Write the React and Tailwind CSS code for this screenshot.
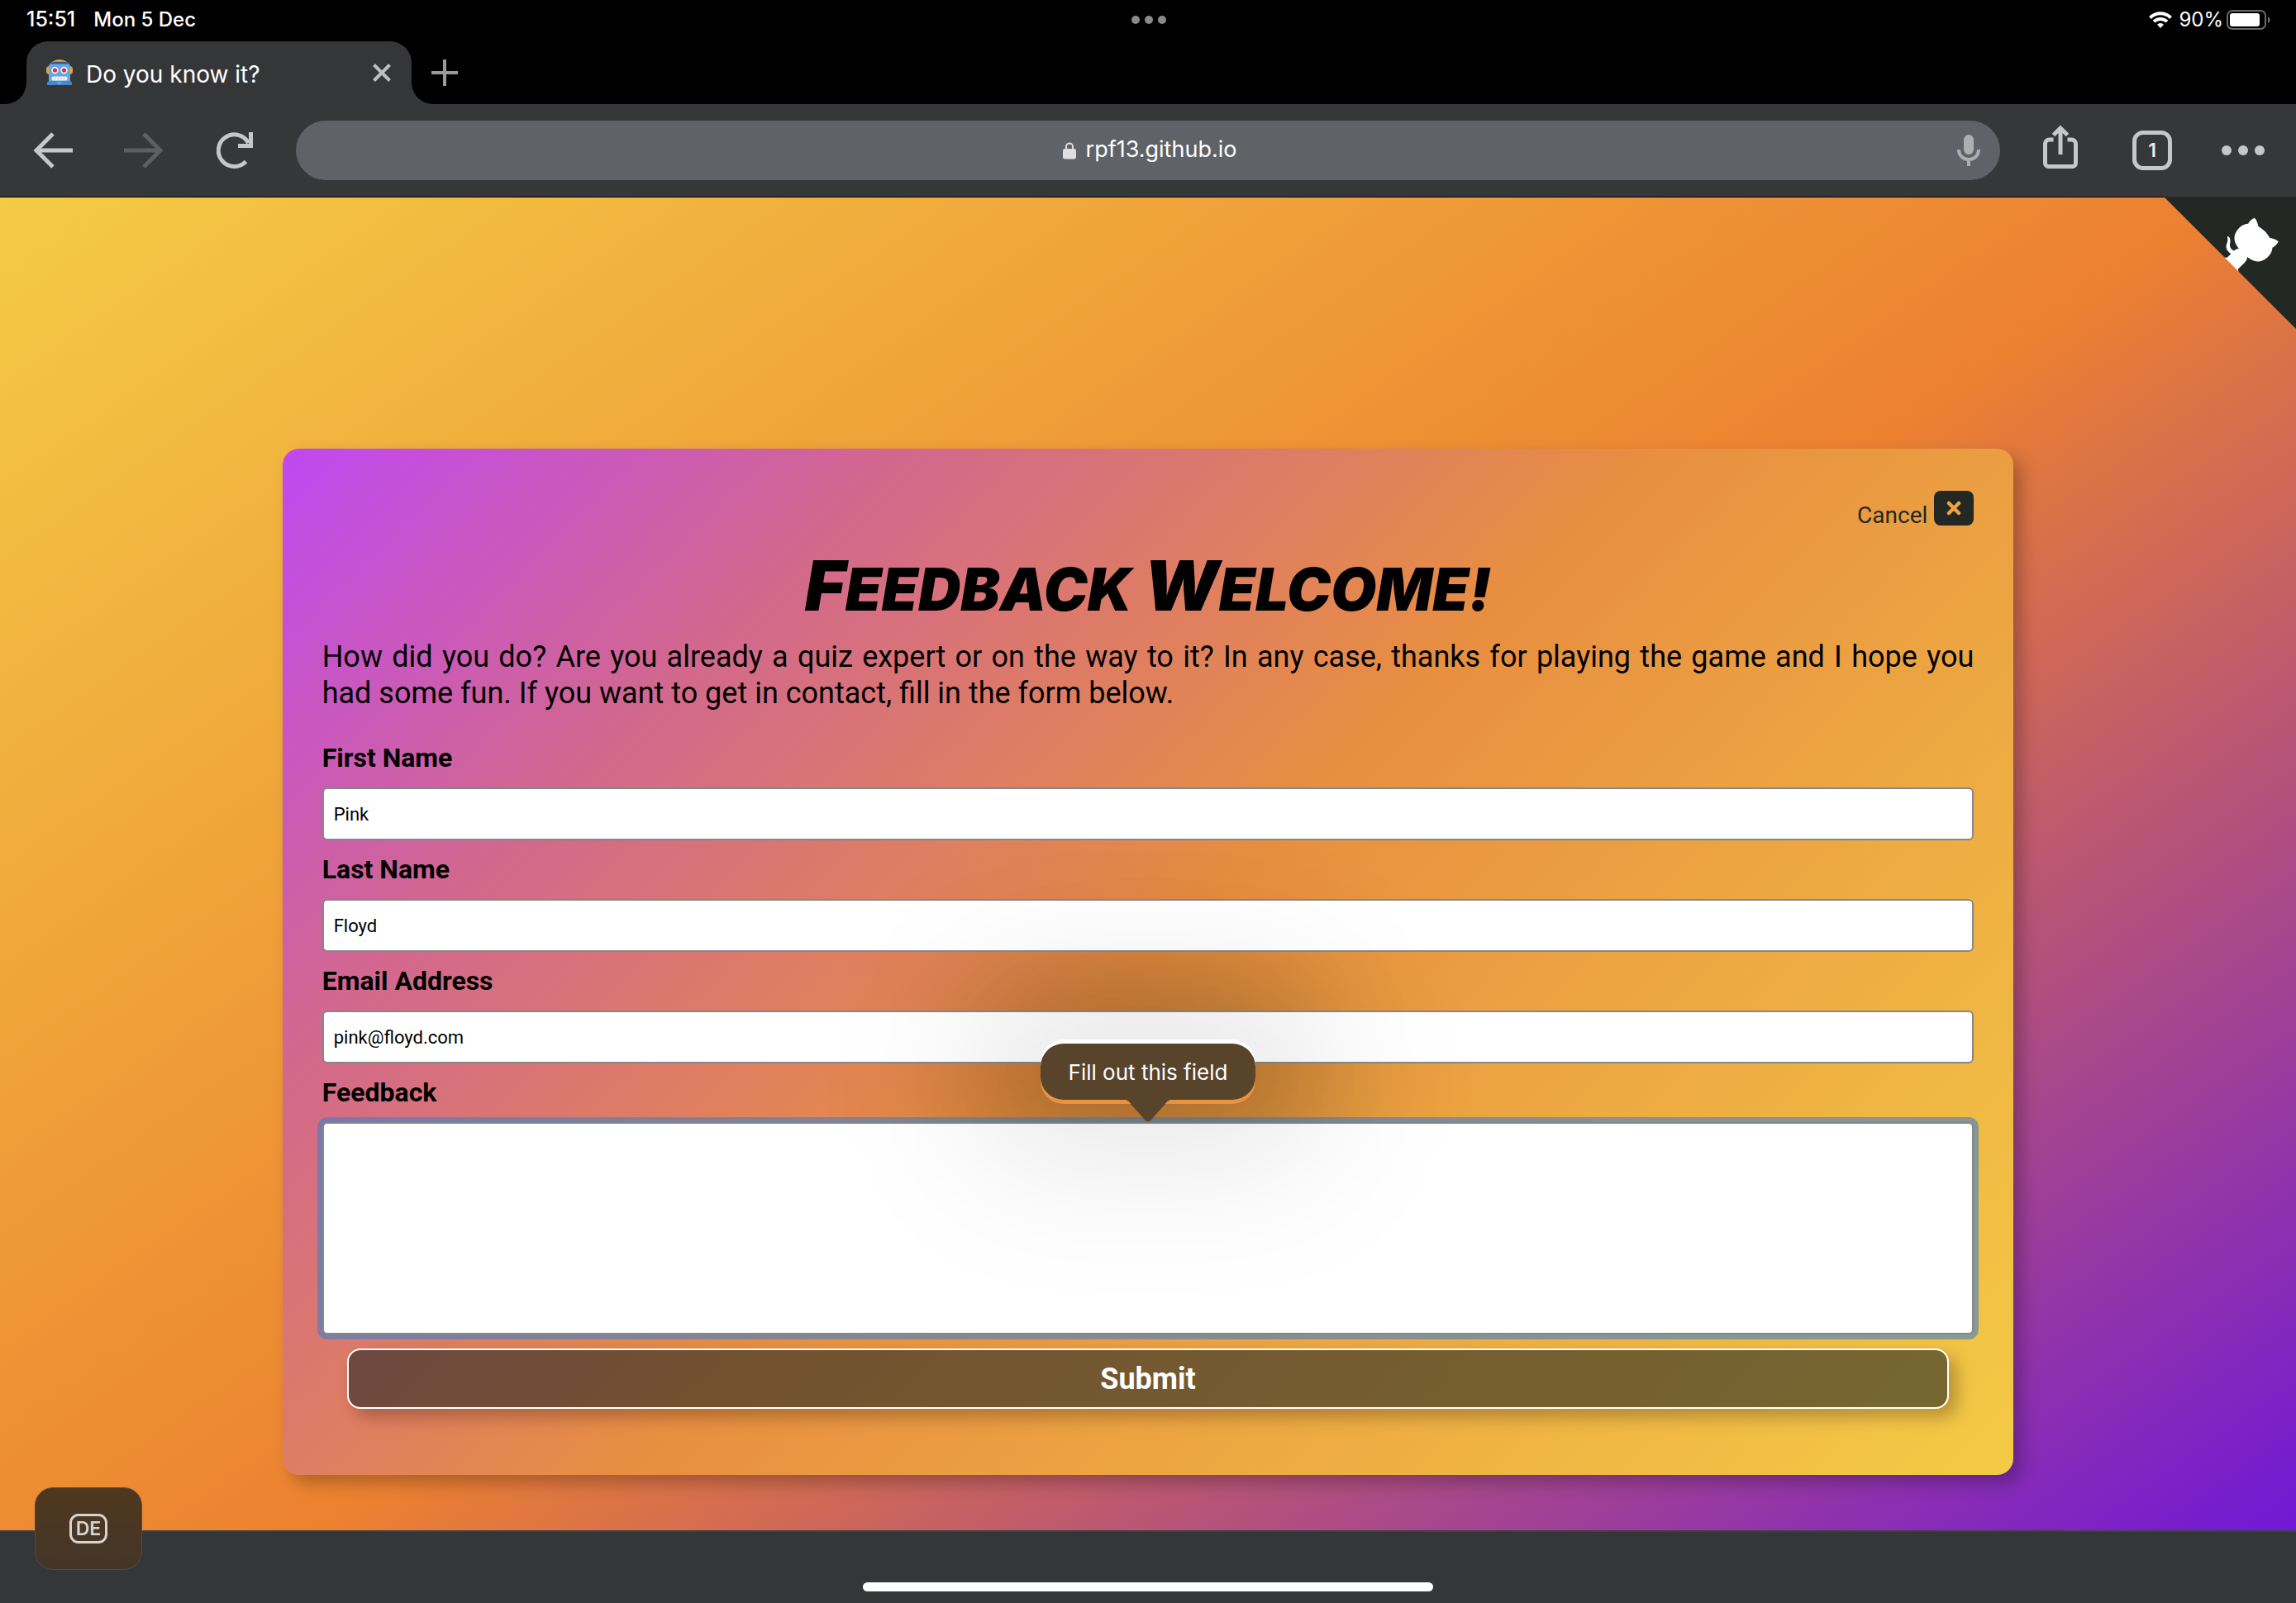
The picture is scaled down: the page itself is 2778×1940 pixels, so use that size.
import React from "react";

const fields = [
  { id: "first-name", label: "First Name", value: "Pink", type: "text" },
  { id: "last-name", label: "Last Name", value: "Floyd", type: "text" },
  { id: "email", label: "Email Address", value: "pink@floyd.com", type: "email" },
];

function StatusBar() {
  return (
    <div className="grid h-[50px] grid-cols-3 items-center pr-[30px] pb-[2px] pl-8 text-2xl font-medium text-white">
      <div className="flex items-baseline gap-[22px]">
        <span className="text-[25px]">15:51</span>
        <span>Mon 5 Dec</span>
      </div>
      <div className="flex justify-center gap-[6px]">
        <span className="size-[10px] rounded-full bg-[#8a8a8a]" />
        <span className="size-[10px] rounded-full bg-[#8a8a8a]" />
        <span className="size-[10px] rounded-full bg-[#8a8a8a]" />
      </div>
      <div className="flex items-center justify-end">
        <svg width="28" height="20" viewBox="0 0 28 20" fill="none" stroke="#fff" strokeWidth="4">
          <path d="M1.5 7.5a17.7 17.7 0 0 1 25 0" />
          <path d="M6 12.2a11.3 11.3 0 0 1 16 0" />
          <path d="M14 20l-4-4.3a5.6 5.6 0 0 1 8 0z" fill="#fff" stroke="none" />
        </svg>
        <span className="mr-1 ml-2 font-normal">90%</span>
        <svg width="54" height="24" viewBox="0 0 54 24">
          <rect x="1" y="1" width="46" height="22" rx="6" fill="none" stroke="#6b6b6b" strokeWidth="2" />
          <rect x="4" y="4" width="36" height="16" rx="3" fill="#fff" />
          <path d="M50 8c3.500 1.500 3.500 6.500 0 8z" fill="#6b6b6b" />
        </svg>
      </div>
    </div>
  );
}

function Robot() {
  return (
    <svg width="32" height="32" viewBox="0 0 32 32">
      <rect x="0" y="8" width="32" height="10" rx="4" fill="#e8a23c" />
      <path d="M7 4c2-5 16-5 18 0z" fill="#f0b13f" />
      <path d="M10 2h12l2 1.500H8z" fill="#c9812a" />
      <path d="M3 9c0-4 3-6 6-6h14c3 0 6 2 6 6v18H3z" fill="#62a8e5" />
      <path d="M4 5.500c2-2 5-2.500 6-2.500h12c1 0 4 .5 6 2.500z" fill="#2f5d8e" />
      <path d="M1 31v-2c0-2 1-3 3-3h24c2 0 3 1 3 3v2z" fill="#4587c9" />
      <path d="M12 27h8l-4 3.500z" fill="#62a8e5" />
      <circle cx="10.500" cy="13" r="4.200" fill="#f4f4f6" />
      <circle cx="21.500" cy="13" r="4.200" fill="#f4f4f6" />
      <circle cx="10.500" cy="13" r="2.600" fill="#cf3345" />
      <circle cx="21.500" cy="13" r="2.600" fill="#cf3345" />
      <rect x="6.500" y="20.500" width="19" height="5" rx="2" fill="#f0f2f5" />
      <path d="M10.500 20.500v5M14.200 20.500v5M17.800 20.500v5M21.500 20.500v5" stroke="#b9c6d6" strokeWidth=".7" />
    </svg>
  );
}

function TabStrip() {
  return (
    <div className="flex h-[76px] items-end">
      <svg width="32" height="76" viewBox="0 0 32 76">
        <path d="M4 76c16 0 28-10 28-28v28z" fill="#353638" />
      </svg>
      <div className="flex h-full w-[466px] items-center rounded-t-[26px] bg-[#353638] pr-[25px] pl-6 text-white">
        <Robot />
        <h2 className="ml-4 grow pt-1 text-[28px] leading-9 font-normal">Do you know it?</h2>
        <button type="button" aria-label="Close tab">
          <svg width="22" height="22" viewBox="0 0 22 22" stroke="#bebfc1" strokeWidth="4">
            <path d="M1.500 1.500l19 19M20.500 1.500l-19 19" />
          </svg>
        </button>
      </div>
      <svg width="28" height="76" viewBox="0 0 28 76">
        <path d="M28 76C12 76 0 66 0 48v28z" fill="#353638" />
      </svg>
      <button type="button" aria-label="New tab" className="-ml-1 self-center">
        <svg width="32" height="32" viewBox="0 0 32 32" stroke="#9b9b9b" strokeWidth="4">
          <path d="M16 0v32M0 16h32" />
        </svg>
      </button>
    </div>
  );
}

function Toolbar() {
  return (
    <div className="flex h-[113px] items-center border-b border-black bg-[#363739] pr-[38px] pl-10">
      <div className="flex items-center">
        <button type="button" aria-label="Back">
          <svg width="48" height="44" viewBox="0 0 48 44" fill="none" stroke="#c7c7c7" strokeWidth="5">
            <path d="M48 22H4M24 2L4 22l20 20" />
          </svg>
        </button>
        <button type="button" aria-label="Forward" className="ml-[62px]">
          <svg width="48" height="44" viewBox="0 0 48 44" fill="none" stroke="#5e5f60" strokeWidth="5">
            <path d="M0 22h44M24 2l20 20-20 20" />
          </svg>
        </button>
        <button type="button" aria-label="Reload" className="ml-16">
          <svg width="44" height="44" viewBox="0 0 44 44" fill="none" stroke="#c7c7c7" strokeWidth="5">
            <path d="M35.500 35.500A19.300 19.300 0 1 1 38.500 13" />
            <path d="M41.500 0v16.500H26" />
          </svg>
        </button>
      </div>
      <div className="mx-[52px] flex h-[72px] grow items-center rounded-full bg-[#5f6267] pr-6">
        <label className="flex grow items-center justify-center gap-3 pl-14">
          <svg width="16" height="21" viewBox="0 0 16 21">
            <path d="M4 9V5.500a4 4 0 0 1 8 0V9" fill="none" stroke="#dedee0" strokeWidth="2" />
            <rect y="8" width="16" height="12.500" rx="2.500" fill="#dedee0" />
          </svg>
          <input
            aria-label="Address"
            readOnly
            defaultValue="rpf13.github.io"
            className="field-sizing-content bg-transparent pb-[2px] text-[27px] leading-9 text-white outline-none"
          />
        </label>
        <button type="button" aria-label="Voice search">
          <svg width="28" height="38" viewBox="0 0 28 38" fill="none">
            <rect x="8" width="12" height="24" rx="6" fill="#adaeb0" />
            <path d="M2 18c0 16 24 16 24 0M14 30v8" stroke="#adaeb0" strokeWidth="4" />
          </svg>
        </button>
      </div>
      <div className="flex items-center">
        <button type="button" aria-label="Share" className="mb-2">
          <svg width="42" height="54" viewBox="0 0 42 54" fill="none" stroke="#c7c7c7" strokeWidth="5">
            <path d="M12.500 18H7.500a5 5 0 0 0-5 5v23.500a4 4 0 0 0 4 4h29a4 4 0 0 0 4-4V23a5 5 0 0 0-5-5h-5" />
            <path d="M21 36V4M12.500 12.500L21 4l8.500 8.500" />
          </svg>
        </button>
        <button
          type="button"
          aria-label="1 open tab"
          className="ml-[66px] size-12 rounded-[13px] border-5 border-[#c7c7c7] text-[23px] leading-none font-semibold text-[#ececec]"
        >
          1
        </button>
        <button type="button" aria-label="Menu" className="ml-[60px] flex gap-2">
          <span className="size-3 rounded-full bg-[#c7c7c7]" />
          <span className="size-3 rounded-full bg-[#c7c7c7]" />
          <span className="size-3 rounded-full bg-[#c7c7c7]" />
        </button>
      </div>
    </div>
  );
}

function GithubCorner() {
  return (
    <a href="https://github.com/rpf13" aria-label="View source on GitHub" className="absolute -top-px right-0">
      <svg width="160" height="160" viewBox="0 0 250 250">
        <path d="M0,0 L115,115 L130,115 L142,142 L250,250 L250,0 Z" fill="#232825" />
        <path
          d="M128.3,109.0 C113.8,99.7 119.0,89.6 119.0,89.6 C122.0,82.7 120.5,78.6 120.5,78.6 C119.2,72.0 123.4,76.3 123.4,76.3 C127.3,80.9 125.5,87.3 125.5,87.3 C122.9,97.6 130.6,101.9 134.4,103.2"
          fill="#fff"
        />
        <path
          d="M115.0,115.0 C114.9,115.1 118.7,116.5 119.8,115.4 L133.7,101.6 C136.9,99.2 139.9,98.4 142.2,98.6 C133.8,88.0 127.5,74.4 143.8,58.0 C148.5,53.4 154.0,51.2 159.7,51.0 C160.3,49.4 163.2,43.6 171.4,40.1 C171.4,40.1 176.1,42.5 178.8,56.2 C183.1,58.6 187.2,61.8 190.9,65.4 C194.5,69.0 197.7,73.2 200.1,77.6 C213.8,80.2 216.9,84.9 216.9,84.9 C212.7,93.1 206.9,96.0 205.4,96.6 C205.1,102.4 203.0,107.8 198.3,112.5 C181.9,128.9 168.3,122.5 157.7,114.1 C157.9,116.9 156.7,120.9 152.7,124.9 L141.0,136.5 C139.8,137.7 141.6,141.9 141.8,141.8 Z"
          fill="#fff"
        />
      </svg>
    </a>
  );
}

function Tooltip() {
  return (
    <>
      <div className="pointer-events-none absolute bottom-full left-1/2 -mb-[49px] h-[220px] w-[420px] -translate-x-1/2 rounded-[60px] bg-black/22 blur-[85px]" />
      <div className="pointer-events-none absolute bottom-full left-1/2 z-20 -mb-[49px] h-[220px] w-[420px] -translate-x-1/2 rounded-[60px] bg-black/9 blur-[85px]" />
      <div
        role="tooltip"
        className="absolute bottom-full left-1/2 z-30 mb-[22px] w-[260px] -translate-x-1/2 rounded-[28px] bg-linear-to-b from-white from-50% to-[#e8933f] to-50% py-[5px]"
      >
        <div className="relative flex h-[68px] items-center justify-center rounded-[28px] bg-[#58432b] font-['Inter'] text-[26px] text-white">
          Fill out this field
          <svg width="54" height="27" viewBox="0 0 54 27" className="absolute top-full left-1/2 -translate-x-1/2">
            <path d="M0 0h54c-3 1-5 3-7 6L31 24c-2 3-6 3-8 0L7 6C5 3 3 1 0 0z" fill="#58432b" />
          </svg>
        </div>
      </div>
    </>
  );
}

function FeedbackCard() {
  return (
    <section className="mx-auto w-[75.4%] rounded-[20px] bg-[linear-gradient(135deg,#bf48f2_0%,#d2678f_22%,#e88f40_50%,#f4cb45_100%)] px-12 pt-[51px] pb-20 shadow-[10px_10px_20px_rgba(0,0,0,0.25)]">
      <div className="flex items-start justify-end gap-2 text-[28px] leading-9 text-[#232825]">
        <span className="pt-3">Cancel</span>
        <button type="button" aria-label="Cancel" className="flex h-[42px] w-12 items-center justify-center rounded-lg bg-[#232825]">
          <svg width="18" height="18" viewBox="0 0 18 18" stroke="#f0a33f" strokeWidth="4.500" strokeLinecap="round">
            <path d="M3 3l12 12M15 3L3 15" />
          </svg>
        </button>
      </div>
      <h1 className="mt-5 text-center font-['Permanent_Marker','Inter',sans-serif] text-[71px] leading-[103px] font-black uppercase italic">
        <span className="text-[84px] leading-none">F</span>eedback <span className="text-[84px] leading-none">W</span>elcome!
      </h1>
      <p className="mt-2 text-justify text-[36px] leading-[44px]">
        How did you do? Are you already a quiz expert or on the way to it? In any case, thanks for playing the game and I
        hope you had some fun. If you want to get in contact, fill in the form below.
      </p>
      <form className="mt-9">
        {fields.map((f) => (
          <div key={f.id} className="mb-[15px]">
            <label htmlFor={f.id} className="block text-[32px] leading-10 font-bold">
              {f.label}
            </label>
            <input
              id={f.id}
              type={f.type}
              defaultValue={f.value}
              className="relative z-10 mt-4 block h-16 w-full rounded-md border-2 border-[#85878b] bg-white px-3 text-[22px]"
            />
          </div>
        ))}
        <label htmlFor="feedback" className="block text-[32px] leading-10 font-bold">
          Feedback
        </label>
        <div className="relative mt-4">
          <Tooltip />
          <textarea
            id="feedback"
            required
            className="relative z-10 block h-[257px] w-full resize-none rounded-md border-2 border-[#85878b] bg-white px-3 py-2 text-[22px] ring-6 ring-[#4080c8]/60 outline-none"
          />
        </div>
        <div className="px-[30px] pt-[17px]">
          <button
            type="submit"
            className="h-[73px] w-full rounded-2xl border-2 border-white bg-[#232825]/60 bg-clip-padding text-[36px] font-bold text-white shadow-[10px_10px_20px_rgba(0,0,0,0.25)]"
          >
            Submit
          </button>
        </div>
      </form>
    </section>
  );
}

export default function App() {
  return (
    <div className="flex min-h-screen flex-col bg-black font-['Inter',sans-serif]">
      <StatusBar />
      <TabStrip />
      <Toolbar />
      <main className="relative grow bg-[linear-gradient(145deg,#f4cb45_0%,#ec8130_53%,#7018d6_100%)] pt-[304px] pb-[67px] font-['Roboto',sans-serif] text-black">
        <GithubCorner />
        <FeedbackCard />
      </main>
      <footer className="relative z-40 flex h-[88px] items-end justify-center border-t-2 border-[#3e4043] bg-[#353638] pb-[14px]">
        <button
          type="button"
          aria-label="Keyboard language DE"
          className="absolute bottom-10 left-[42px] flex h-[100px] w-[130px] items-center justify-center rounded-[22px] border border-[#574a3a] bg-linear-to-b from-[#50371e] to-[#433627]"
        >
          <span className="flex h-9 w-[46px] items-center justify-center rounded-[11px] border-3 border-[#d8d4cf] text-[23px] leading-none font-semibold text-[#d8d4cf]">
            DE
          </span>
        </button>
        <div className="h-[11px] w-[690px] rounded-full bg-white" />
      </footer>
    </div>
  );
}
